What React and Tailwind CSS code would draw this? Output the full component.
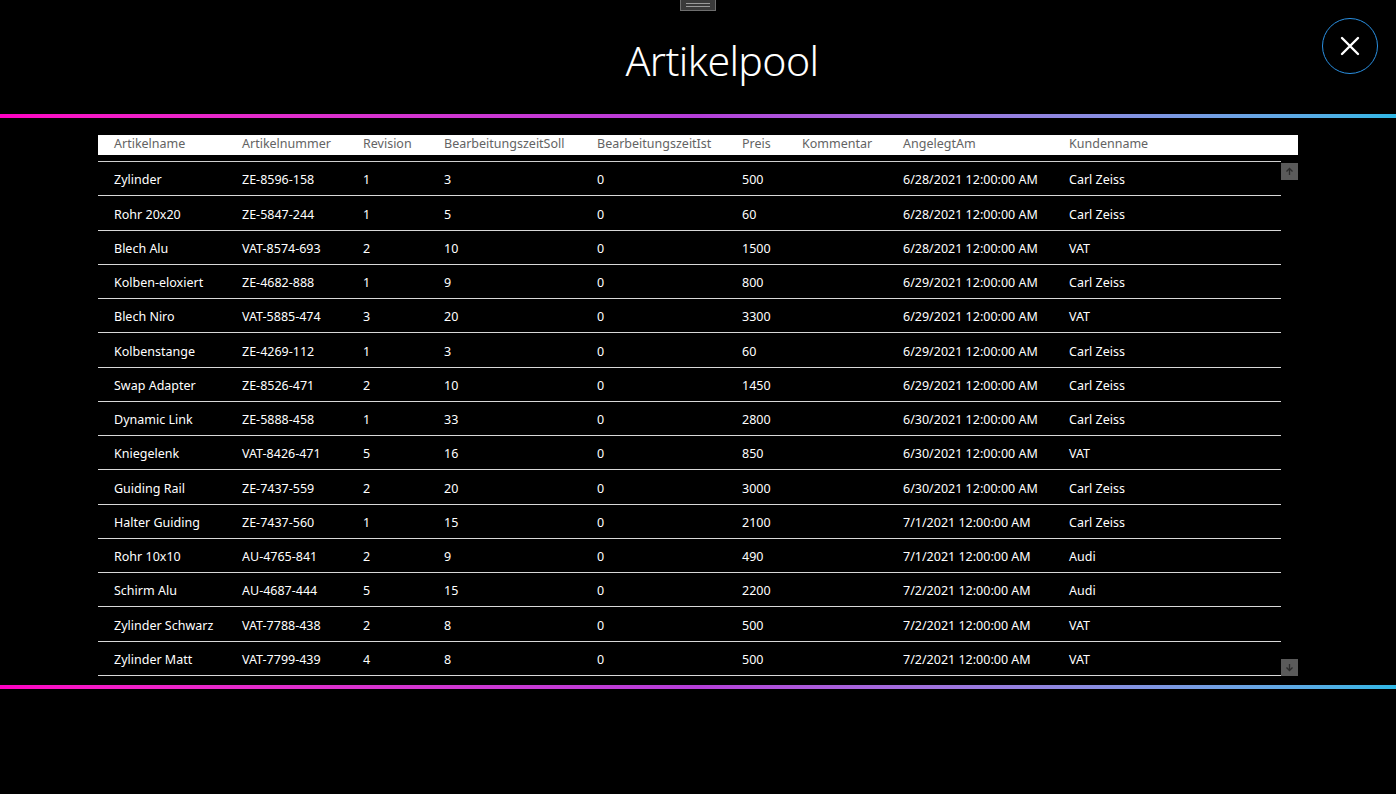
import React from 'react';

const cols = [
  { key: 'name', label: 'Artikelname', w: 'w-[144px] pl-[16px]' },
  { key: 'nr', label: 'Artikelnummer', w: 'w-[121px]' },
  { key: 'rev', label: 'Revision', w: 'w-[81px]' },
  { key: 'soll', label: 'BearbeitungszeitSoll', w: 'w-[153px]' },
  { key: 'ist', label: 'BearbeitungszeitIst', w: 'w-[145px]' },
  { key: 'preis', label: 'Preis', w: 'w-[60px]' },
  { key: 'komm', label: 'Kommentar', w: 'w-[101px]' },
  { key: 'am', label: 'AngelegtAm', w: 'w-[166px]' },
  { key: 'kunde', label: 'Kundenname', w: 'flex-1' },
];

const rows = [
  ['Zylinder', 'ZE-8596-158', '1', '3', '0', '500', '', '6/28/2021 12:00:00 AM', 'Carl Zeiss'],
  ['Rohr 20x20', 'ZE-5847-244', '1', '5', '0', '60', '', '6/28/2021 12:00:00 AM', 'Carl Zeiss'],
  ['Blech Alu', 'VAT-8574-693', '2', '10', '0', '1500', '', '6/28/2021 12:00:00 AM', 'VAT'],
  ['Kolben-eloxiert', 'ZE-4682-888', '1', '9', '0', '800', '', '6/29/2021 12:00:00 AM', 'Carl Zeiss'],
  ['Blech Niro', 'VAT-5885-474', '3', '20', '0', '3300', '', '6/29/2021 12:00:00 AM', 'VAT'],
  ['Kolbenstange', 'ZE-4269-112', '1', '3', '0', '60', '', '6/29/2021 12:00:00 AM', 'Carl Zeiss'],
  ['Swap Adapter', 'ZE-8526-471', '2', '10', '0', '1450', '', '6/29/2021 12:00:00 AM', 'Carl Zeiss'],
  ['Dynamic Link', 'ZE-5888-458', '1', '33', '0', '2800', '', '6/30/2021 12:00:00 AM', 'Carl Zeiss'],
  ['Kniegelenk', 'VAT-8426-471', '5', '16', '0', '850', '', '6/30/2021 12:00:00 AM', 'VAT'],
  ['Guiding Rail', 'ZE-7437-559', '2', '20', '0', '3000', '', '6/30/2021 12:00:00 AM', 'Carl Zeiss'],
  ['Halter Guiding', 'ZE-7437-560', '1', '15', '0', '2100', '', '7/1/2021 12:00:00 AM', 'Carl Zeiss'],
  ['Rohr 10x10', 'AU-4765-841', '2', '9', '0', '490', '', '7/1/2021 12:00:00 AM', 'Audi'],
  ['Schirm Alu', 'AU-4687-444', '5', '15', '0', '2200', '', '7/2/2021 12:00:00 AM', 'Audi'],
  ['Zylinder Schwarz', 'VAT-7788-438', '2', '8', '0', '500', '', '7/2/2021 12:00:00 AM', 'VAT'],
  ['Zylinder Matt', 'VAT-7799-439', '4', '8', '0', '500', '', '7/2/2021 12:00:00 AM', 'VAT'],
];

const font = { fontFamily: '"Segoe UI", "Noto Sans", "Open Sans", sans-serif' };

function GradientLine() {
  return <div className="h-[4px] w-full bg-gradient-to-r from-[#ff00c3] via-[#b43ed8] to-[#2eb8e6]" />;
}

export default function App() {
  return (
    <div className="relative h-[794px] w-full overflow-hidden bg-black text-white" style={font}>
      {/* drag handle */}
      <div className="flex justify-center">
        <div className="flex h-[11px] w-[36px] flex-col items-center justify-center gap-[2px] border border-t-0 border-[#6e6e6e] bg-[#3a3a3a]">
          <div className="h-px w-[24px] bg-[#9a9a9a]" />
          <div className="h-px w-[24px] bg-[#9a9a9a]" />
        </div>
      </div>

      <div className="flex h-[103px] items-center justify-center pb-[4px] pl-[48px]">
        <h1 className="text-[41px] font-light leading-none tracking-[-0.6px]">Artikelpool</h1>
      </div>

      <button className="absolute right-[18px] top-[18px] flex h-[56px] w-[56px] items-center justify-center rounded-full border border-[#2a8fe0]">
        <svg width="22" height="22" viewBox="0 0 22 22" stroke="white" strokeWidth="2.4" strokeLinecap="round">
          <path d="M3 3 L19 19 M19 3 L3 19" />
        </svg>
      </button>

      <GradientLine />

      <div className="ml-[98px] mt-[17px] w-[1200px]">
        <div className="flex h-[20px] items-center bg-white pb-[2px] text-[12.5px] text-[#636363]">
          {cols.map((c) => (
            <div key={c.key} className={`${c.w} whitespace-nowrap`}>
              {c.label}
            </div>
          ))}
        </div>

        <div className="mt-[6px] flex">
          <div className="w-[1183px] border-t border-[#d0d0d0]">
            {rows.map((r, i) => (
              <div key={i} className="flex h-[34.27px] items-center border-b border-[#d8d8d8] pt-[4px] text-[12.5px]">
                {cols.map((c, j) => (
                  <div key={c.key} className={`${c.w} whitespace-nowrap`}>
                    {r[j]}
                  </div>
                ))}
              </div>
            ))}
          </div>
          <div className="flex w-[17px] flex-col justify-between pt-[2px]">
            <div className="flex h-[17px] w-[17px] items-center justify-center bg-[#5a5a5a]">
              <svg width="9" height="9" viewBox="0 0 9 9" fill="none" stroke="#2b2b2b" strokeWidth="1.3">
                <path d="M4.5 8 V1.5 M1.5 4.5 L4.5 1.5 L7.5 4.5" />
              </svg>
            </div>
            <div className="flex h-[17px] w-[17px] items-center justify-center bg-[#5a5a5a]">
              <svg width="9" height="9" viewBox="0 0 9 9" fill="none" stroke="#2b2b2b" strokeWidth="1.3">
                <path d="M4.5 1 V7.5 M1.5 4.5 L4.5 7.5 L7.5 4.5" />
              </svg>
            </div>
          </div>
        </div>
      </div>

      <div className="mt-[9px]">
        <GradientLine />
      </div>
    </div>
  );
}
